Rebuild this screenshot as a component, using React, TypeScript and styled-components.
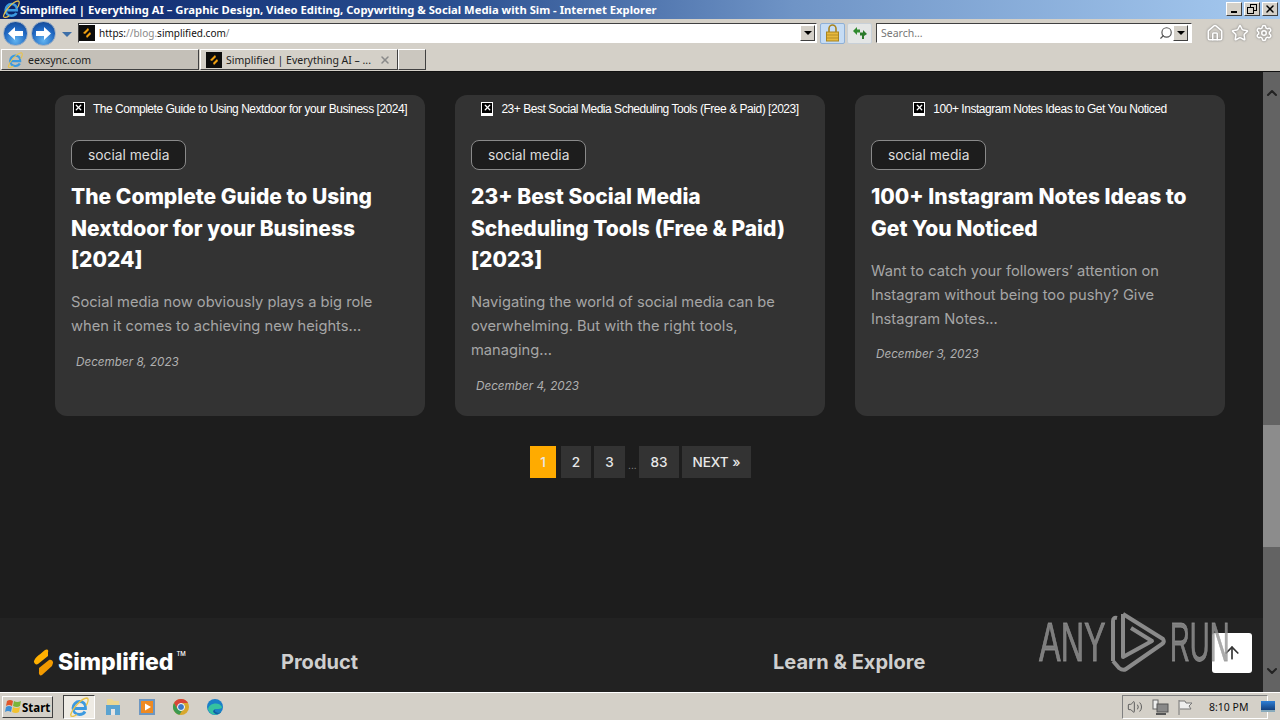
import React from 'react';
import styled, { createGlobalStyle } from 'styled-components';
import { ArrowUp, ChevronDown, ChevronUp, House, Search, Settings, Star, Volume2, X } from 'lucide-react';

const GlobalStyle = createGlobalStyle`
  html, body { margin: 0; padding: 0; overflow: hidden; background: #1d1d1d; }
  * { box-sizing: border-box; }
`;

const UI_FONT = `"Noto Sans", "Liberation Sans", sans-serif`;
const WEB_FONT = `Inter, "Liberation Sans", sans-serif`;

const Screen = styled.div`
  width: 1280px;
  height: 720px;
  display: flex;
  flex-direction: column;
  overflow: hidden;
  position: relative;
  font-family: ${UI_FONT};
`;

/* ---- title bar ---- */
const TitleBar = styled.div`
  height: 19px;
  flex: none;
  display: flex;
  align-items: center;
  padding: 0 2px 1px 2px;
  background: linear-gradient(90deg, #0a246a 0%, #2a4f90 35%, #6f94c6 62%, #a6caf0 100%);
`;
const TitleText = styled.span`
  margin-left: 0;
  color: #fff;
  font: 700 11.25px ${UI_FONT};
  white-space: nowrap;
  flex: 1;
`;
const WinButtons = styled.div`
  display: flex;
  gap: 2px;
`;
const WinButton = styled.div`
  width: 16px;
  height: 14px;
  background: #d4d0c8;
  border: 1px solid;
  border-color: #fff #404040 #404040 #fff;
  display: flex;
  align-items: center;
  justify-content: center;
  color: #000;
`;

/* ---- toolbar ---- */
const Toolbar = styled.div`
  height: 28px;
  flex: none;
  display: flex;
  align-items: center;
  padding: 0 3px;
  background: #d4d0c8;
`;
const NavCircle = styled.div`
  width: 25px;
  height: 25px;
  border-radius: 50%;
  margin-right: 3px;
  background: radial-gradient(circle at 50% 80%, #62b4f0 0%, #1f66c0 55%, #123f86 100%);
  border: 1.5px solid #9fb0c4;
  display: flex;
  align-items: center;
  justify-content: center;
`;
const NavCaret = styled.div`
  width: 0;
  height: 0;
  margin: 2px 6px 0 3px;
  border-left: 5px solid transparent;
  border-right: 5px solid transparent;
  border-top: 5px solid #3d6fa8;
`;
const AddressBox = styled.div`
  width: 739px;
  height: 20px;
  display: flex;
  align-items: center;
  background: #fff;
  border: 1px solid;
  border-color: #404040 #fff #fff #404040;
  font: 10px ${UI_FONT};
  color: #222;
  padding-right: 1px;
`;
const UrlText = styled.span`
  margin-left: 4px;
  flex: 1;
  color: #111;
  i { font-style: normal; color: #8a8a8a; }
`;
const DropButton = styled.div`
  width: 15px;
  height: 16px;
  flex: none;
  background: #d4d0c8;
  border: 1px solid;
  border-color: #fff #404040 #404040 #fff;
  display: flex;
  align-items: center;
  justify-content: center;
  &::after {
    content: '';
    border-left: 4px solid transparent;
    border-right: 4px solid transparent;
    border-top: 4px solid #000;
  }
`;
const ToolIcon = styled.div<{ $active?: boolean }>`
  width: 25px;
  height: 21px;
  margin-left: ${p => (p.$active ? '3px' : '2px')};
  display: flex;
  align-items: center;
  justify-content: center;
  background: ${p => (p.$active ? '#c6dcf4' : '#e4e6e6')};
  border: 1px solid ${p => (p.$active ? '#8fb0d6' : '#c8d0d8')};
  border-radius: 2px;
`;
const SearchBox = styled.div`
  width: 316px;
  height: 20px;
  margin-left: 4px;
  display: flex;
  align-items: center;
  background: #fff;
  border: 1px solid;
  border-color: #404040 #fff #fff #404040;
  padding-right: 3px;
  color: #777;
  font: 10.5px ${UI_FONT};
`;
const SearchText = styled.span`
  margin-left: 4px;
  flex: 1;
`;
const RightIcons = styled.div`
  margin-left: 14px;
  display: flex;
  gap: 6.5px;
  color: #fff;
  svg { filter: drop-shadow(0 0 1px #777); }
`;

/* ---- tabs ---- */
const TabStrip = styled.div`
  height: 24px;
  flex: none;
  display: flex;
  align-items: flex-end;
  padding: 2px 0 1px 1px;
  background: #d4d0c8;
`;
const Tab = styled.div<{ $active?: boolean; $w: number; $gap?: number }>`
  width: ${p => p.$w}px;
  height: 21px;
  display: flex;
  align-items: center;
  gap: ${p => p.$gap ?? 4}px;
  padding: 0 6px 0 5px;
  margin-left: ${p => (p.$active ? '1px' : '0')};
  border: 1px solid;
  border-color: #fff #404040 #404040 #fff;
  background: ${p => (p.$active ? '#d4d0c8' : '#c4c0b8')};
  font: 10.5px ${UI_FONT};
  color: #222;
  white-space: nowrap;
  overflow: hidden;
`;
const TabTitle = styled.span`
  flex: 1;
`;
const NewTab = styled.div`
  width: 28px;
  height: 21px;
  border: 1px solid;
  border-color: #fff #404040 #404040 #fff;
  background: #cbc7bf;
`;

/* ---- page ---- */
const Viewport = styled.div`
  flex: 1;
  min-height: 0;
  display: flex;
  border-top: 1px solid #111;
`;
const Page = styled.main`
  flex: 1;
  display: flex;
  flex-direction: column;
  background: #1d1d1d;
  font-family: ${WEB_FONT};
  position: relative;
`;
const CardGrid = styled.section`
  display: grid;
  grid-template-columns: repeat(3, 370px);
  gap: 30px;
  padding: 23px 0 0 55px;
`;
const Card = styled.article`
  height: 321px;
  padding: 0 16px;
  border-radius: 12px;
  background: #333333;
`;
const BrokenImage = styled.div`
  height: 27px;
  display: flex;
  align-items: center;
  justify-content: center;
  gap: 8px;
  font: 12px "Liberation Sans", Arial, sans-serif;
  letter-spacing: -0.47px;
  color: #fff;
  white-space: nowrap;
`;
const BrokenMark = styled.span`
  width: 12px;
  height: 14px;
  flex: none;
  display: flex;
  align-items: flex-start;
  justify-content: center;
  background: #fff;
  border: 1px solid #fff;
  border-bottom-width: 3px;
`;
const BrokenInner = styled.span`
  width: 10px;
  height: 10px;
  background: #000;
  color: #fff;
  display: flex;
  align-items: center;
  justify-content: center;
`;
const Tag = styled.span`
  display: inline-flex;
  align-items: center;
  height: 30px;
  margin-top: 18px;
  padding: 0 16px;
  background: #1d1d1d;
  border: 1px solid #8a8a8a;
  border-radius: 8px;
  color: #dcdcdc;
  font-size: 13.8px;
`;
const CardTitle = styled.h2`
  margin: 11px 0 0;
  color: #fff;
  font-size: 21px;
  font-weight: 800;
  line-height: 31.5px;
`;
const Excerpt = styled.p`
  margin: 14.6px 0 0;
  color: #a6a6a6;
  font-size: 14.7px;
  line-height: 24px;
`;
const DateLine = styled.div`
  margin: 16.5px 0 0 5px;
  color: #b0b0b0;
  font-size: 11.7px;
  font-style: italic;
`;
const Pager = styled.nav`
  display: flex;
  align-items: center;
  margin: 30px 0 0 530px;
  gap: 3px;
`;
const PageLink = styled.a<{ $current?: boolean; $w: number }>`
  width: ${p => p.$w}px;
  height: 32px;
  display: flex;
  align-items: center;
  justify-content: center;
  font-size: 13.6px;
  font-weight: 500;
  color: #e8e8e8;
  background: ${p => (p.$current ? '#ffab00' : '#333333')};
  margin-right: ${p => (p.$current ? '2px' : '0')};
`;
const Dots = styled.span`
  width: 8px;
  color: #888;
  font-size: 10px;
  align-self: flex-end;
  padding-bottom: 7px;
`;
const Footer = styled.footer`
  margin-top: auto;
  height: 74px;
  flex: none;
  background: #222222;
  display: flex;
  align-items: flex-start;
  padding: 30px 0 0 33px;
`;
const Logo = styled.div`
  width: 248px;
  display: flex;
  align-items: center;
  gap: 4px;
  color: #fff;
  font-size: 23px;
  font-weight: 800;
  line-height: 28px;
  sup { font-size: 6px; font-weight: 500; margin: -16px 0 0 -1px; }
`;
const FooterHead = styled.div<{ $w?: number }>`
  width: ${p => (p.$w ? `${p.$w}px` : 'auto')};
  color: #cfcfcf;
  font-size: 20px;
  font-weight: 700;
  line-height: 28px;
`;
const Watermark = styled.div`
  position: absolute;
  left: 1039px;
  top: 538px;
  display: flex;
  align-items: center;
  color: rgba(150, 150, 150, 0.8);
  font: 400 55px "Liberation Sans", sans-serif;
  -webkit-text-stroke: 0.8px rgba(150, 150, 150, 0.8);
  pointer-events: none;
`;
const WmWord = styled.span<{ $scale: number; $w: number }>`
  display: inline-block;
  width: ${p => p.$w}px;
  transform: scaleX(${p => p.$scale});
  transform-origin: left center;
  white-space: nowrap;
`;
const ToTop = styled.button`
  position: absolute;
  left: 1212px;
  top: 561px;
  width: 40px;
  height: 40px;
  padding: 0;
  border: 0;
  border-radius: 3px;
  background: #fff;
  color: #333;
  display: flex;
  align-items: center;
  justify-content: center;
`;
const ScrollBar = styled.div`
  width: 17px;
  flex: none;
  display: flex;
  flex-direction: column;
  align-items: center;
  background: #636363;
  color: #222;
`;
const ScrollEnd = styled.div`
  height: 17px;
  margin-top: 12px;
  display: flex;
  align-items: center;
`;
const ScrollThumb = styled.div`
  width: 17px;
  height: 122px;
  margin-top: 324px;
  background: #8c8c8c;
`;
const ScrollEndLow = styled(ScrollEnd)`
  margin-top: 115px;
`;

/* ---- taskbar ---- */
const Taskbar = styled.div`
  height: 28px;
  flex: none;
  display: flex;
  align-items: center;
  padding: 1px 0 0 2px;
  background: #d4d0c8;
  border-top: 1px solid #fff;
  position: relative;
`;
const StartButton = styled.div`
  width: 51px;
  height: 22px;
  display: flex;
  align-items: center;
  gap: 0;
  padding-left: 1px;
  border: 1px solid;
  border-color: #fff #404040 #404040 #fff;
  font: 700 11.5px ${UI_FONT};
  color: #000;
`;
const TaskItem = styled.div<{ $active?: boolean }>`
  width: 32px;
  height: 24px;
  margin-left: ${p => (p.$active ? '10px' : '2px')};
  display: flex;
  align-items: center;
  justify-content: center;
  background: ${p => (p.$active ? '#eeebe4' : 'transparent')};
  border: ${p => (p.$active ? '1px solid' : '0')};
  border-color: #404040 #fff #fff #404040;
`;
const Tray = styled.div`
  margin-left: auto;
  width: 146px;
  height: 24px;
  margin-right: 12px;
  display: flex;
  align-items: center;
  gap: 8px;
  padding-left: 4px;
  border: 1px solid;
  border-color: #808080 #fff #fff #808080;
  color: #555;
`;
const Clock = styled.span`
  margin-left: 8px;
  font: 10.5px ${UI_FONT};
  color: #111;
  white-space: nowrap;
`;
const ShowDesktop = styled.div`
  position: absolute;
  right: 5px;
  bottom: 8px;
  width: 14px;
  height: 11px;
  background: linear-gradient(#2f7fd6, #14407e);
  border-bottom: 2px solid #8ab;
`;

const SimplifiedMark = () => (
  <svg width="21" height="27" viewBox="0 0 21 27">
    <path d="M2 10 C4 7 10 3 12 1 C14 -0.5 16 1 15 3 L15 7 L5 15 C3 16.5 0.5 14 1 12 Z" fill="#ffb000" />
    <path d="M6 23 L6 19 L16 11 C18 10 20.5 12 20 14 L19 17 L9 26 C7 27.5 5.5 25 6 23 Z" fill="#f29a00" />
  </svg>
);

const FavTile = () => (
  <svg width="16" height="16" viewBox="0 0 16 16">
    <rect width="16" height="16" fill="#0c0c0c" />
    <path d="M4 8 L9 3 L10 5 L6 9 Z M7 11 L11 7 L12 9 L8 13 Z" fill="#f0a010" />
  </svg>
);

const IeLogo = ({ size }: { size: number }) => (
  <svg width={size} height={size} viewBox="0 0 20 20">
    <path d="M4 11.5 H16.5 C17 7 14 4.5 10.5 4.5 C7 4.5 4 7.5 4 11 C4 15 7 17.5 10.5 17.5 C13 17.5 15 16.5 16 14.5" fill="none" stroke="#3c9ae0" strokeWidth="2.8" />
    <path d="M1.5 18.5 C3 12 12 1.5 18 1 C20 1.5 19 6 17 8.5 M1.5 18.5 C3 20 6 19 8 17.5" fill="none" stroke="#e8c34a" strokeWidth="1.3" />
  </svg>
);

const NavArrow = ({ back }: { back?: boolean }) => (
  <svg width="17" height="15" viewBox="0 0 17 15" style={{ transform: back ? undefined : 'scaleX(-1)' }}>
    <path d="M1 7.5 L8 1 V5 H16 V10 H8 V14 Z" fill="#fff" />
  </svg>
);

const Lock = () => (
  <svg width="15" height="18" viewBox="0 0 15 18">
    <path d="M4 8 V4.5 a3.5 3.5 0 0 1 7 0 V8" fill="none" stroke="#a88420" strokeWidth="1.6" />
    <rect x="1.5" y="8" width="12" height="9" fill="#e8b93c" stroke="#a88420" />
    <path d="M2 11 H13 M2 14 H13" stroke="#b48f28" />
  </svg>
);

const CompatIcon = () => (
  <svg width="16" height="14" viewBox="0 0 16 14">
    <path d="M1 5 L5 1 V3.5 H8 V6.5 H5 V9 Z" fill="#2f8a2f" />
    <path d="M15 8 L11 4 V6.5 H8 V9.5 H10 V13 H12 V10 Z" fill="#2a7a2a" />
  </svg>
);

const FolderIcon = () => (
  <svg width="18" height="20" viewBox="0 0 18 20">
    <path d="M3 2 H8 L10 4 H15 V9 H3 Z" fill="#ecd793" />
    <rect x="2" y="8" width="14" height="10" fill="#5ba3d0" />
    <rect x="7" y="12" width="4" height="6" fill="#e4e4e4" />
  </svg>
);

const MediaIcon = () => (
  <svg width="18" height="18" viewBox="0 0 18 18">
    <rect x="1" y="1" width="16" height="16" fill="#6d97c2" />
    <rect x="3" y="3" width="12" height="12" fill="#ee8a22" />
    <path d="M7 5.5 L13 9 L7 12.5 Z" fill="#fff" />
  </svg>
);

const ChromeIcon = () => (
  <svg width="18" height="18" viewBox="0 0 18 18">
    <circle cx="9" cy="9" r="8" fill="#d8a82e" />
    <path d="M9 1 a8 8 0 0 0 -7 4 l3.5 6 L9 5 h7 A8 8 0 0 0 9 1" fill="#d8453a" />
    <path d="M2 5 a8 8 0 0 0 5.5 11.8 L11 11 H5.5 Z" fill="#3c9a50" />
    <circle cx="9" cy="9" r="3.5" fill="#3c78c8" stroke="#fff" />
  </svg>
);

const EdgeIcon = () => (
  <svg width="18" height="18" viewBox="0 0 18 18">
    <circle cx="9" cy="9" r="8" fill="#1a7fc8" />
    <path d="M2 11 C3 5 13 3 16 9 C16 11 12 11 9 11 C8 13 11 16 15 14 C12 18 4 18 2 11" fill="#35c2a0" />
    <path d="M9 11 C8 13 11 16 15 14 C13 17 8 17 7 13 Z" fill="#0f5ba8" />
  </svg>
);

const StartFlag = () => (
  <svg width="18" height="16" viewBox="0 0 18 16">
    <path d="M3 2 Q6 0 9 2 L8 7 Q5 5 2 7 Z" fill="#e0562a" />
    <path d="M10 2 Q13 4 17 2 L16 7 Q13 9 9 7 Z" fill="#7ab53a" />
    <path d="M2 8 Q5 6 8 8 L7 13 Q4 11 1 13 Z" fill="#3d8fd6" />
    <path d="M9 8 Q12 10 16 8 L15 13 Q12 15 8 13 Z" fill="#f2c230" />
  </svg>
);

const NetIcon = () => (
  <svg width="18" height="17" viewBox="0 0 18 17">
    <rect x="2" y="1" width="5" height="9" fill="#eee" stroke="#666" />
    <rect x="6" y="5" width="11" height="8" fill="#888" stroke="#555" />
    <path d="M5 15 H15" stroke="#555" strokeWidth="2" />
  </svg>
);

const FlagIcon = () => (
  <svg width="16" height="17" viewBox="0 0 16 17">
    <path d="M2 1 V16 M2 2 H8 L9 4 H15 L12 7 L14 10 H3" fill="#eee" stroke="#777" />
  </svg>
);

const AnyRunMark = () => (
  <svg width="60" height="62" viewBox="0 0 60 62" fill="none" stroke="#8a8a8a" strokeWidth="4" strokeLinejoin="round">
    <path d="M5 50 V10 Q5 6 9 7" />
    <path d="M15 3 L55 28 Q57 31 54 33 L18 58 Q15 60 11 57 L5 50" />
    <path d="M15 3 V46 L44 30 L23 17" />
  </svg>
);

const posts = [
  {
    title: 'The Complete Guide to Using Nextdoor for your Business [2024]',
    excerpt: 'Social media now obviously plays a big role when it comes to achieving new heights...',
    date: 'December 8, 2023',
  },
  {
    title: '23+ Best Social Media Scheduling Tools (Free & Paid) [2023]',
    excerpt: 'Navigating the world of social media can be overwhelming. But with the right tools, managing...',
    date: 'December 4, 2023',
  },
  {
    title: '100+ Instagram Notes Ideas to Get You Noticed',
    excerpt: 'Want to catch your followers’ attention on Instagram without being too pushy? Give Instagram Notes...',
    date: 'December 3, 2023',
  },
];

export default function App() {
  return (
    <Screen>
      <GlobalStyle />
      <TitleBar>
        <IeLogo size={18} />
        <TitleText>Simplified | Everything AI – Graphic Design, Video Editing, Copywriting &amp; Social Media with Sim - Internet Explorer</TitleText>
        <WinButtons>
          <WinButton><svg width="8" height="8"><rect x="1" y="6" width="6" height="2" /></svg></WinButton>
          <WinButton><svg width="10" height="10" fill="none" stroke="#000"><rect x="3.5" y="0.5" width="6" height="6" /><rect x="0.5" y="3.5" width="6" height="6" fill="#d4d0c8" /></svg></WinButton>
          <WinButton><X size={12} strokeWidth={3} /></WinButton>
        </WinButtons>
      </TitleBar>

      <Toolbar>
        <NavCircle><NavArrow back /></NavCircle>
        <NavCircle><NavArrow /></NavCircle>
        <NavCaret />
        <AddressBox>
          <FavTile />
          <UrlText>https:<i>//blog.</i>simplified.com<i>/</i></UrlText>
          <DropButton />
        </AddressBox>
        <ToolIcon $active><Lock /></ToolIcon>
        <ToolIcon><CompatIcon /></ToolIcon>
        <SearchBox>
          <SearchText>Search...</SearchText>
          <Search size={14} color="#555" style={{ transform: 'scaleX(-1)' }} />
          <DropButton />
        </SearchBox>
        <RightIcons>
          <House size={18} />
          <Star size={18} />
          <Settings size={18} />
        </RightIcons>
      </Toolbar>

      <TabStrip>
        <Tab $w={198} $gap={5}><IeLogo size={16} />eexsync.com</Tab>
        <Tab $active $w={198}>
          <FavTile />
          <TabTitle>Simplified | Everything AI – ...</TabTitle>
          <X size={12} strokeWidth={3} color="#8a8a8a" />
        </Tab>
        <NewTab />
      </TabStrip>

      <Viewport>
        <Page>
          <CardGrid>
            {posts.map(post => (
              <Card key={post.date}>
                <BrokenImage>
                  <BrokenMark>
                    <BrokenInner><X size={9} strokeWidth={3.5} /></BrokenInner>
                  </BrokenMark>
                  {post.title}
                </BrokenImage>
                <Tag>social media</Tag>
                <CardTitle>{post.title}</CardTitle>
                <Excerpt>{post.excerpt}</Excerpt>
                <DateLine>{post.date}</DateLine>
              </Card>
            ))}
          </CardGrid>
          <Pager>
            <PageLink $current $w={26}>1</PageLink>
            <PageLink $w={30}>2</PageLink>
            <PageLink $w={31}>3</PageLink>
            <Dots>...</Dots>
            <PageLink $w={40}>83</PageLink>
            <PageLink $w={69}>NEXT »</PageLink>
          </Pager>
          <Footer>
            <Logo>
              <SimplifiedMark />
              Simplified<sup>TM</sup>
            </Logo>
            <FooterHead $w={492}>Product</FooterHead>
            <FooterHead>Learn &amp; Explore</FooterHead>
          </Footer>
          <ToTop><ArrowUp size={20} /></ToTop>
          <Watermark>
            <WmWord $scale={0.59} $w={69}>ANY</WmWord>
            <AnyRunMark />
            <WmWord $scale={0.5} $w={60} style={{ marginLeft: 2 }}>RUN</WmWord>
          </Watermark>
        </Page>
        <ScrollBar>
          <ScrollEnd><ChevronUp size={16} strokeWidth={3} /></ScrollEnd>
          <ScrollThumb />
          <ScrollEndLow><ChevronDown size={16} strokeWidth={3} /></ScrollEndLow>
        </ScrollBar>
      </Viewport>

      <Taskbar>
        <StartButton><StartFlag />Start</StartButton>
        <TaskItem $active><IeLogo size={20} /></TaskItem>
        <TaskItem><FolderIcon /></TaskItem>
        <TaskItem><MediaIcon /></TaskItem>
        <TaskItem><ChromeIcon /></TaskItem>
        <TaskItem><EdgeIcon /></TaskItem>
        <Tray>
          <Volume2 size={16} strokeWidth={1.4} />
          <NetIcon />
          <FlagIcon />
          <Clock>8:10 PM</Clock>
        </Tray>
        <ShowDesktop />
      </Taskbar>
    </Screen>
  );
}
